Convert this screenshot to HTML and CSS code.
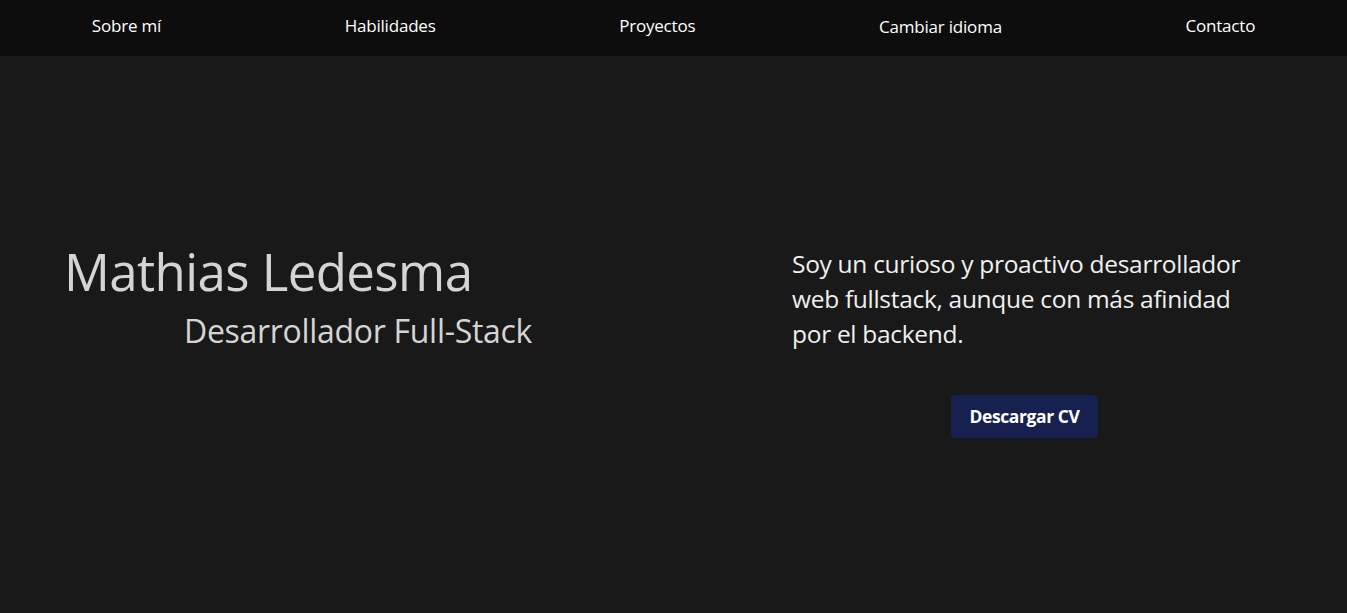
FILE: index.html
```html
<!DOCTYPE html>
<html lang="es">
<head>
<meta charset="utf-8">
<title>Mathias Ledesma</title>
<link rel="stylesheet" href="styles.css">
</head>
<body>
<nav class="nav">
  <a class="nav-link" href="#">Sobre mí</a>
  <a class="nav-link" href="#">Habilidades</a>
  <a class="nav-link" href="#">Proyectos</a>
  <button class="nav-link nav-btn" type="button">Cambiar idioma</button>
  <a class="nav-link" href="#">Contacto</a>
</nav>
<main class="hero">
  <section class="hero-left">
    <h1 class="name">Mathias Ledesma</h1>
    <h2 class="role">Desarrollador Full-Stack</h2>
  </section>
  <section class="hero-right">
    <p class="about">Soy un curioso y proactivo desarrollador web fullstack, aunque con más afinidad por el backend.</p>
    <button class="cv-btn" type="button">Descargar CV</button>
  </section>
</main>
</body>
</html>
```
FILE: styles.css
```css
* { box-sizing: border-box; }
html, body { margin: 0; padding: 0; }
body {
  background: #191919;
  font-family: "Open Sans", "Noto Sans", sans-serif;
  color: #fff;
  height: 613px;
  overflow: hidden;
}
.nav {
  height: 56px;
  background: #0d0d0d;
  display: flex;
  justify-content: space-around;
  align-items: center;
  padding-bottom: 6px;
}
.nav-link {
  color: #fff;
  text-decoration: none;
  font-family: inherit;
  font-size: 17px;
  letter-spacing: -0.2px;
}
.nav-btn {
  background: none;
  border: 0;
  padding: 0;
  margin-top: 2px;
}
.hero {
  height: 557px;
  display: flex;
  align-items: center;
}
.hero-left {
  width: 673px;
  padding-left: 64px;
  margin-top: -78px;
}
.name {
  margin: 0;
  font-weight: 400;
  font-size: 51px;
  line-height: 60px;
  color: #d4d4d4;
  letter-spacing: -0.6px;
}
.role {
  margin: 11px 0 0 120px;
  font-weight: 400;
  font-size: 32px;
  line-height: 38px;
  color: #d4d4d4;
  letter-spacing: -0.3px;
}
.hero-right {
  padding-left: 119px;
  width: 584px;
  display: flex;
  flex-direction: column;
  align-items: center;
  margin-top: 14px;
}
.about {
  margin: 0;
  font-size: 24.5px;
  line-height: 35px;
  color: #f0f0f0;
  letter-spacing: -0.3px;
  width: 100%;
}
.cv-btn {
  margin-top: 44px;
  width: 147px;
  height: 43px;
  background: #172150;
  color: #fff;
  border: 0;
  border-radius: 4px;
  font-family: inherit;
  font-weight: 700;
  font-size: 17.5px;
  letter-spacing: -0.4px;
}
```
